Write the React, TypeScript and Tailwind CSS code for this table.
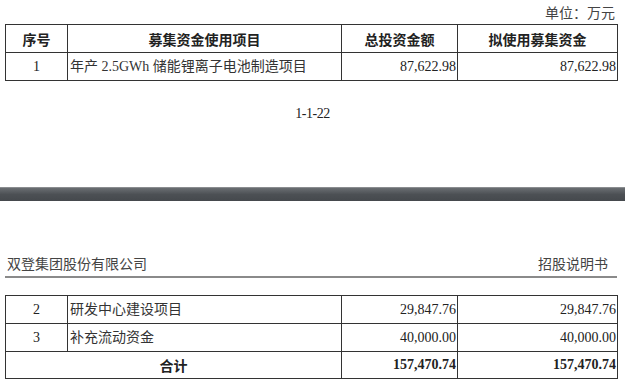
const serif = "font-['Liberation_Serif','Noto_Sans_CJK_SC',serif]";

interface Row {
  no: string;
  name: string;
  total: string;
  use: string;
}

const top: Row[] = [
  { no: "1", name: "年产 2.5GWh 储能锂离子电池制造项目", total: "87,622.98", use: "87,622.98" },
];

const bottom: Row[] = [
  { no: "2", name: "研发中心建设项目", total: "29,847.76", use: "29,847.76" },
  { no: "3", name: "补充流动资金", total: "40,000.00", use: "40,000.00" },
];

function Cols() {
  return (
    <colgroup>
      <col className="w-[62px]" />
      <col className="w-[274px]" />
      <col className="w-[116px]" />
      <col className="w-[160px]" />
    </colgroup>
  );
}

function BodyRow({ r }: { r: Row }) {
  return (
    <tr className="h-[28px]">
      <td className="border border-[#333] text-center">{r.no}</td>
      <td className="border border-[#333] pl-[2px] text-[#333]">{r.name}</td>
      <td className="border border-[#333] text-right pr-[1px]">{r.total}</td>
      <td className="border border-[#333] text-right pr-[1px]">{r.use}</td>
    </tr>
  );
}

export default function App() {
  return (
    <div className={`w-[625px] h-[386px] bg-white text-[#222] text-[14px] leading-none ${serif} overflow-hidden`}>
      {/* page end */}
      <div className="px-[5px] pt-[7px]">
        <div className="w-[612px] text-right pr-[2px] text-[#444] h-[17px]">单位：万元</div>
        <table className="w-[612px] table-fixed border-collapse">
          <Cols />
          <thead>
            <tr className="h-[28px] font-bold font-['Noto_Sans_CJK_SC',sans-serif] text-[14px]">
              <th className="border border-[#333]">序号</th>
              <th className="border border-[#333]">募集资金使用项目</th>
              <th className="border border-[#333]">总投资金额</th>
              <th className="border border-[#333]">拟使用募集资金</th>
            </tr>
          </thead>
          <tbody>
            {top.map((r) => (
              <BodyRow key={r.no} r={r} />
            ))}
          </tbody>
        </table>
        <div className="text-center pt-[26px] text-[#222] tracking-[-0.5px]">1-1-22</div>
      </div>

      {/* page gap */}
      <div className="mt-[66px] h-[14px] bg-gradient-to-b from-[#6a6e72] via-[#4c5054] to-[#45494d] border-t border-[#8a8d90]" />

      {/* next page */}
      <div className="px-[5px] pt-[57px]">
        <div className="w-[612px] flex justify-between items-end pb-[4px] border-b-2 border-[#8a8a8a] text-[#444] pl-[2px]">
          <span>双登集团股份有限公司</span>
          <span className="pr-[9px]">招股说明书</span>
        </div>
        <table className="mt-[17px] w-[612px] table-fixed border-collapse">
          <Cols />
          <tbody>
            {bottom.map((r) => (
              <BodyRow key={r.no} r={r} />
            ))}
            <tr className="h-[27px] font-bold">
              <td colSpan={2} className="border border-[#333] text-center font-['Noto_Sans_CJK_SC',sans-serif]">
                合计
              </td>
              <td className="border border-[#333] text-right pr-[1px]">157,470.74</td>
              <td className="border border-[#333] text-right pr-[1px]">157,470.74</td>
            </tr>
          </tbody>
        </table>
      </div>
    </div>
  );
}
